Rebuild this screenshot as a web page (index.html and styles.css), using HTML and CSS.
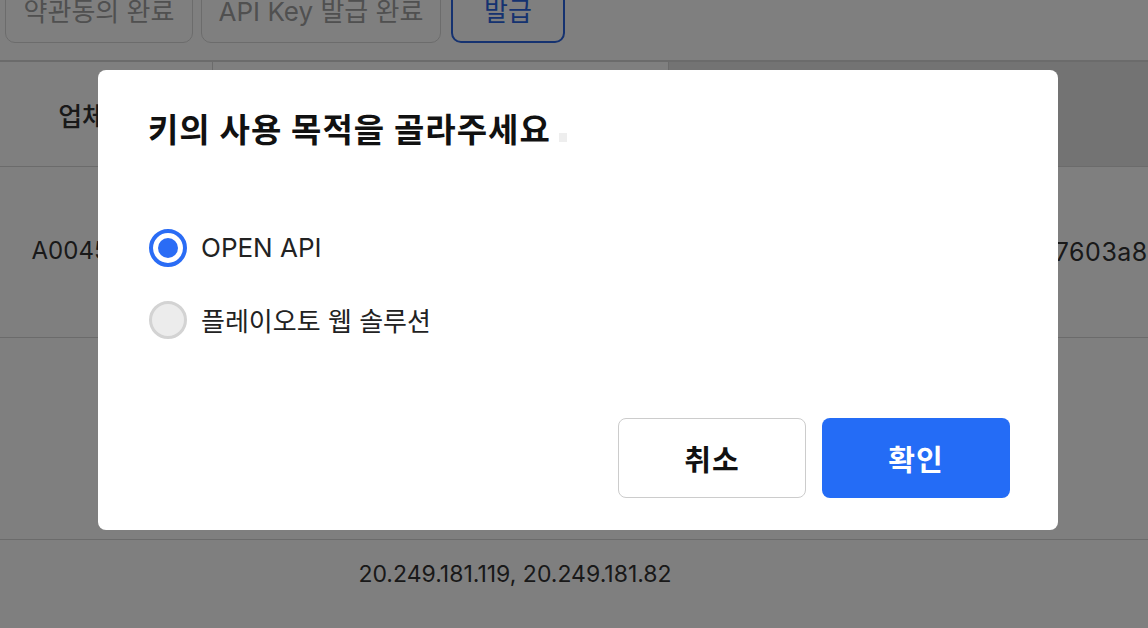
FILE: index.html
```html
<!DOCTYPE html>
<html lang="ko">
<head>
<meta charset="utf-8">
<title>API Key 발급</title>
<link rel="stylesheet" href="styles.css">
</head>
<body>
<div class="page">
  <div class="toolbar">
    <button class="tool-btn done w1">약관동의 완료</button>
    <button class="tool-btn done w2">API Key 발급 완료</button>
    <button class="tool-btn primary w3">발급</button>
  </div>

  <div class="table">
    <div class="row head">
      <div class="cell c1">업체코드</div>
      <div class="cell c2">업체명</div>
      <div class="cell c3 shade">API Key</div>
    </div>
    <div class="row r1">
      <div class="cell c1">A004598213</div>
      <div class="cell c2">플레이오토</div>
      <div class="cell c3 key"><span class="key-text">b7e2d4c1f0a597603a8e6d2f</span></div>
    </div>
    <div class="row r2">
      <div class="cell c1"></div>
      <div class="cell c2"></div>
      <div class="cell c3"></div>
    </div>
    <div class="row r3">
      <div class="cell ip">20.249.181.119, 20.249.181.82</div>
    </div>
  </div>
</div>

<div class="overlay">
  <div class="dialog" role="dialog" aria-labelledby="dlg-title">
    <h2 class="dialog-title" id="dlg-title">키의 사용 목적을 골라주세요<span class="caret"></span></h2>
    <div class="options">
      <label class="option">
        <span class="radio checked"><span class="dot"></span></span>
        <span class="opt-label">OPEN API</span>
      </label>
      <label class="option">
        <span class="radio"></span>
        <span class="opt-label">플레이오토 웹 솔루션</span>
      </label>
    </div>
    <div class="actions">
      <button class="btn cancel">취소</button>
      <button class="btn confirm">확인</button>
    </div>
  </div>
</div>
</body>
</html>
```

FILE: styles.css
```css
html, body {
  margin: 0;
  padding: 0;
  width: 1148px;
  height: 628px;
  overflow: hidden;
  background: #ffffff;
  font-family: Inter, "Noto Sans CJK KR", sans-serif;
  color: #333333;
}

.page {
  width: 1148px;
}

/* ---------- toolbar ---------- */
.toolbar {
  display: flex;
  align-items: stretch;
  padding-left: 5px;
  margin-top: -25px;
  height: 68px;
}

.tool-btn {
  box-sizing: border-box;
  height: 68px;
  border-radius: 10px;
  background: #ffffff;
  font-family: Inter, "Noto Sans CJK KR", sans-serif;
  font-size: 26px;
  padding: 0;
  white-space: nowrap;
}

.tool-btn.done {
  border: 1.5px solid #d8d8d8;
  color: #a0a0a0;
}

.tool-btn.primary {
  border: 2px solid #2a64e0;
  color: #2a64e0;
}

.w1 { width: 188px; }
.w2 { width: 240px; margin-left: 8px; }
.w3 { width: 114px; margin-left: 10px; }

/* ---------- table ---------- */
.table {
  margin-top: 17px;
  border-top: 2px solid #d6d6d6;
}

.row {
  display: flex;
  border-bottom: 1.5px solid #d6d6d6;
  font-size: 24px;
}

.row.head {
  height: 104px;
  font-weight: 500;
  font-size: 26px;
}

.row.r1 { height: 170px; }
.row.r2 { height: 201px; }
.row.r3 { height: 100px; border-bottom: none; }

.cell {
  display: flex;
  align-items: center;
  justify-content: center;
  box-sizing: border-box;
  white-space: nowrap;
}

.c1 { width: 213px; }
.c2 { width: 456px; }
.c3 { flex: 1; overflow: hidden; }

.head .c1, .head .c2 { border-right: 1.5px solid #d6d6d6; }
.head .shade { background: #e6e6e6; }

.r1 .c1 { padding-bottom: 4px; padding-right: 4px; }

.key {
  justify-content: flex-start;
  padding-left: 197px;
  font-size: 25px;
  letter-spacing: 0.5px;
}

.ip {
  flex: 1;
  font-size: 23px;
  padding-left: 213px;
  padding-right: 331px;
  height: 68px;
}

/* ---------- modal ---------- */
.overlay {
  position: fixed;
  inset: 0;
  background: rgba(0, 0, 0, 0.5);
  display: flex;
  align-items: flex-start;
  justify-content: flex-start;
  padding: 70px 0 0 98px;
}

.dialog {
  box-sizing: border-box;
  width: 960px;
  height: 460px;
  background: #ffffff;
  border-radius: 8px;
  padding: 40px 48px 32px 50px;
  display: flex;
  flex-direction: column;
}

.dialog-title {
  margin: 0;
  height: 40px;
  line-height: 40px;
  font-size: 33px;
  font-weight: 700;
  color: #111111;
  letter-spacing: 1px;
  display: flex;
  align-items: center;
}

.caret {
  display: inline-block;
  width: 8px;
  height: 9px;
  background: #eeeeee;
  margin-left: 8px;
  margin-top: 14px;
}

.options {
  margin-top: 79px;
  display: flex;
  flex-direction: column;
  gap: 34px;
}

.option {
  display: flex;
  align-items: center;
  height: 38px;
  gap: 14px;
}

.radio {
  box-sizing: border-box;
  width: 38px;
  height: 38px;
  border-radius: 50%;
  border: 3px solid #d3d3d3;
  background: #ececec;
  display: flex;
  align-items: center;
  justify-content: center;
  margin-left: 1px;
}

.radio.checked {
  border: 4px solid #2a6cf5;
  background: #ffffff;
}

.radio .dot {
  width: 20px;
  height: 20px;
  border-radius: 50%;
  background: #2a6cf5;
}

.opt-label {
  font-size: 26px;
  color: #222222;
  margin-top: -2px;
}

.actions {
  margin-top: auto;
  display: flex;
  justify-content: flex-end;
  gap: 16px;
}

.btn {
  box-sizing: border-box;
  width: 188px;
  height: 80px;
  border-radius: 8px;
  font-family: Inter, "Noto Sans CJK KR", sans-serif;
  font-size: 29px;
  font-weight: 700;
  letter-spacing: 1px;
  cursor: pointer;
}

.btn.cancel {
  background: #ffffff;
  border: 1.5px solid #cccccc;
  color: #111111;
}

.btn.confirm {
  background: #246cf6;
  border: none;
  color: #ffffff;
}
```
